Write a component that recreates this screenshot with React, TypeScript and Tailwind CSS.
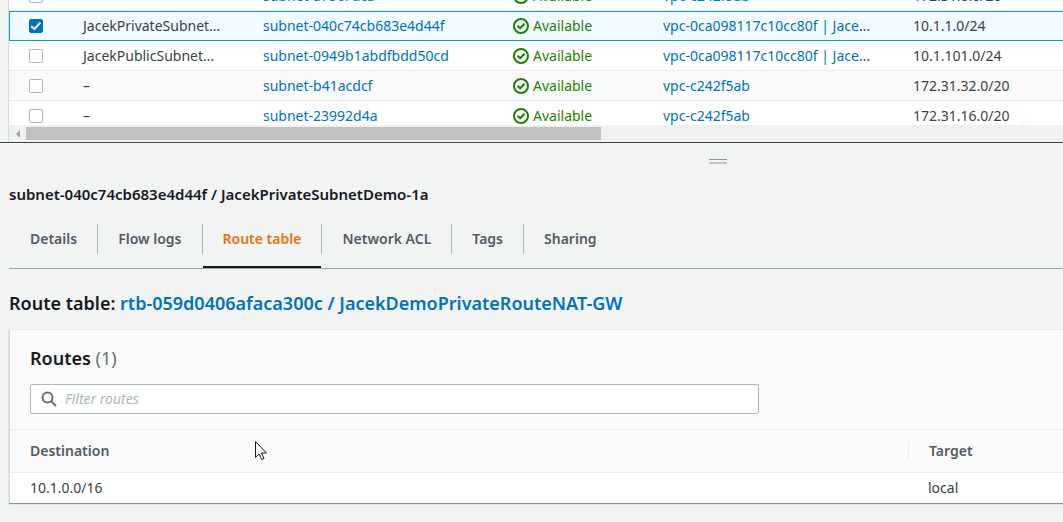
import { ReactNode } from "react";

type Subnet = { id: string; name: string; vpc: string; cidr: string; selected?: boolean; more?: boolean };

const subnets: Subnet[] = [
  { name: "–", id: "subnet-a75c7dca", vpc: "vpc-c242f5ab", cidr: "172.31.0.0/20" },
  { name: "JacekPrivateSubnet…", id: "subnet-040c74cb683e4d44f", vpc: "vpc-0ca098117c10cc80f | Jace", cidr: "10.1.1.0/24", selected: true, more: true },
  { name: "JacekPublicSubnet…", id: "subnet-0949b1abdfbdd50cd", vpc: "vpc-0ca098117c10cc80f | Jace", cidr: "10.1.101.0/24", more: true },
  { name: "–", id: "subnet-b41acdcf", vpc: "vpc-c242f5ab", cidr: "172.31.32.0/20" },
  { name: "–", id: "subnet-23992d4a", vpc: "vpc-c242f5ab", cidr: "172.31.16.0/20" },
];

const tabs = ["Details", "Flow logs", "Route table", "Network ACL", "Tags", "Sharing"];

function Link({ children }: { children: ReactNode }) {
  return <a href="#" className="text-[#0073bb]">{children}</a>;
}

function StatusIcon() {
  return (
    <svg className="size-4 shrink-0" viewBox="0 0 16 16" fill="none" stroke="#1d8102" strokeWidth="2" aria-hidden="true">
      <circle cx="8" cy="8" r="7" />
      <path d="M4.5 7.8 7.2 10.3 11.5 5.8" />
    </svg>
  );
}

function SubnetRow({ subnet, shaded }: { subnet: Subnet; shaded: boolean }) {
  const tone = subnet.selected
    ? "bg-[#f1faff] outline outline-1 -outline-offset-1 outline-[#00a1c9]"
    : shaded
      ? "bg-[#fafafa]"
      : "bg-white";
  return (
    <tr className={`h-[30px] ${tone} shadow-[inset_0_-1px_0_#eaeded]`}>
      <td className="pl-5">
        <input
          type="checkbox"
          defaultChecked={subnet.selected}
          aria-label={`Select ${subnet.id}`}
          className="block size-3.5 appearance-none rounded-xs border border-[#aab7b8] bg-white bg-center bg-no-repeat checked:border-[#0073bb] checked:bg-[#0073bb] checked:bg-[url('data:image/svg+xml,%3Csvg%20xmlns=%22http://www.w3.org/2000/svg%22%20viewBox=%220%200%2012%2012%22%3E%3Cpath%20d=%22M1.2%206.200l3.300%202.700L10.300%202.600%22%20fill=%22none%22%20stroke=%22white%22%20stroke-width=%222%22/%3E%3C/svg%3E')]"
        />
      </td>
      <td>{subnet.name}</td>
      <td><Link>{subnet.id}</Link></td>
      <td>
        <span className="flex items-center gap-1 text-[#1d8102]"><StatusIcon />Available</span>
      </td>
      <td><Link>{subnet.vpc}</Link>{subnet.more && "…"}</td>
      <td>{subnet.cidr}</td>
    </tr>
  );
}

export default function App() {
  return (
    <div className="min-h-screen overflow-hidden bg-[#f2f3f3] font-['Noto_Sans','Open_Sans',sans-serif] text-sm leading-5 text-[#16191f]">
      <section aria-label="Subnets" className="border-b border-[#37475a] pl-2">
        <div className="border-l border-[#d5dbdb]">
          <div className="h-[125px] overflow-hidden bg-white">
            <table className="-mt-[19px] w-full min-w-[1060px] table-fixed border-collapse whitespace-nowrap text-[#3b3f46]">
              <colgroup>
                <col className="w-[74px]" />
                <col className="w-[180px]" />
                <col className="w-[250px]" />
                <col className="w-[150px]" />
                <col className="w-[250px]" />
                <col />
              </colgroup>
              <tbody>
                {subnets.map((s, i) => <SubnetRow key={s.id} subnet={s} shaded={i === 3} />)}
              </tbody>
            </table>
          </div>
          <div className="flex h-[17px] items-center bg-[#f0f0f0]">
            <button aria-label="Scroll left" className="flex w-[17px] justify-center">
              <svg viewBox="0 0 4 8" className="h-2 w-1" fill="#a3a3a3"><path d="M4 0v8L0 4z" /></svg>
            </button>
            <div className="h-[13px] w-6/11 bg-[#c1c1c1]" />
          </div>
        </div>
      </section>

      <main className="pl-[9px]">
        <div className="flex h-9 justify-center pr-9 pl-[400px]">
          <button aria-label="Resize panel" className="mt-4 h-[5px] w-[18px] border-t border-b-2 border-t-[#879596] border-b-[#c1c5c5]" />
        </div>
        <h2 className="pt-[3px] text-[15px] leading-6 font-semibold">subnet-040c74cb683e4d44f / JacekPrivateSubnetDemo-1a</h2>

        <nav role="tablist" className="mt-[17px] flex border-b border-[#95a5a6] pl-px">
          {tabs.map((t) => {
            const active = t === "Route table";
            return (
              <div key={t} className="flex items-start">
                <button
                  role="tab"
                  aria-selected={active}
                  className={`h-[45px] border-b-2 px-5 pb-3 font-semibold ${active ? "border-[#16191f] text-[#ec7211]" : "border-transparent text-[#545b64]"}`}
                >
                  {t}
                </button>
                {t !== "Sharing" && <span className="mt-px h-[30px] w-px bg-[#aab7b8]" />}
              </div>
            );
          })}
        </nav>

        <h3 className="mt-[22px] text-lg leading-6 font-semibold">
          Route table: <Link>rtb-059d0406afaca300c / JacekDemoPrivateRouteNAT-GW</Link>
        </h3>

        <section aria-label="Routes" className="mt-3.5 border-t border-l border-[#d5dbdb] border-t-[#eaeded] bg-[#fafafa] shadow-[0_1px_1px_#879596]">
          <div className="px-5 pt-4 pb-[15px]">
            <h4 className="text-lg leading-6 font-semibold">Routes <span className="font-normal text-[#687078]">(1)</span></h4>
            <label className="mt-3.5 flex h-[30px] w-[72%] items-center gap-2 rounded-xs border border-[#aab7b8] bg-white px-2.5">
              <svg viewBox="0 0 16 16" className="size-4" fill="none" stroke="#687078" strokeWidth="2" aria-hidden="true">
                <circle cx="6.5" cy="6.5" r="5" /><path d="M10 10l5 5" />
              </svg>
              <input aria-label="Filter routes" placeholder="Filter routes" className="min-w-0 flex-1 outline-none placeholder:text-[#aab7b8] placeholder:italic" />
            </label>
          </div>
          <table className="w-full table-fixed border-collapse text-left">
            <thead>
              <tr className="h-[43px] border-y border-[#eaeded] text-[#545b64]">
                <th className="pl-5 font-semibold">Destination</th>
                <th className="w-[155px] font-semibold"><span className="block border-l border-[#eaeded] pl-5">Target</span></th>
              </tr>
            </thead>
            <tbody>
              <tr className="h-[30px] bg-white text-[#3b3f46]">
                <td className="pl-5">10.1.0.0/16</td>
                <td className="pl-5">local</td>
              </tr>
            </tbody>
          </table>
        </section>
      </main>

      <svg className="pointer-events-none absolute top-[440px] left-[254px] h-[21px] w-[14px]" viewBox="0 0 14 21" fill="white" stroke="#16191f" strokeWidth="1" aria-hidden="true">
        <path d="M1.500 1.500v16l3.600-3.500 2.600 5.500 2.300-1-2.500-5.500h5z" />
      </svg>
    </div>
  );
}
